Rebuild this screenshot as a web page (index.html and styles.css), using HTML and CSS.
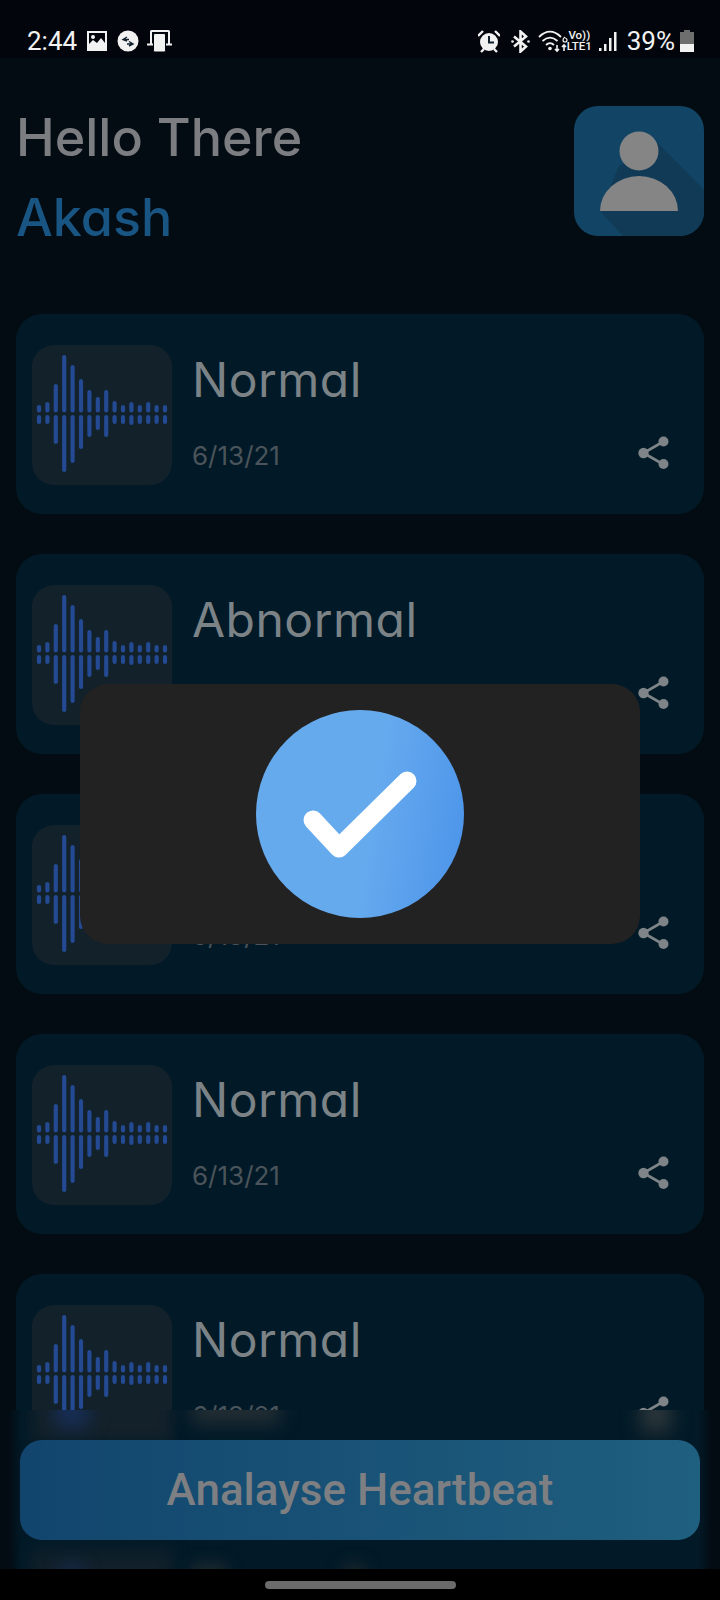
FILE: index.html
```html
<!DOCTYPE html>
<html lang="en">
<head>
<meta charset="utf-8">
<title>Heartbeat</title>
<link rel="stylesheet" href="styles.css">
</head>
<body>
<svg class="defs" width="0" height="0" aria-hidden="true">
  <symbol id="wave" viewBox="0 0 140 140">
    <path d="M7 62V65.500M15.400 59V65.500M23.800 41V65.500M32.200 12V65.500M40.600 22V65.500M49 36V65.500M57.400 47V65.500M65.800 54V65.500M74.200 47V65.500M82.600 58V65.500M91 62V65.500M99.400 59V65.500M107.800 62V65.500M116.200 59V65.500M124.600 62V65.500M133 62V65.500M7 72V77M15.400 72V77M23.800 72V97M32.200 72V125M40.600 72V116M49 72V102M57.400 72V90M65.800 72V83M74.200 72V90M82.600 72V77M91 72V77M99.400 72V78M107.800 72V77M116.200 72V77M124.600 72V77M133 72V77" fill="none" stroke="#234a92" stroke-width="4.200" stroke-linecap="round"/>
  </symbol>
  <symbol id="share" viewBox="0 0 32 33">
    <path d="M25.500 5.500 5.500 17 25.500 28.500" fill="none" stroke="#7e8487" stroke-width="2.600"/>
    <circle cx="25.500" cy="5.500" r="5" fill="#7e8487"/>
    <circle cx="5.500" cy="17" r="5.200" fill="#7e8487"/>
    <circle cx="25.500" cy="28" r="5" fill="#7e8487"/>
  </symbol>
</svg>
<div class="app">
  <div class="status">
    <div class="status-left">
      <span class="clock">2:44</span>
      <svg class="ic" width="20" height="20" viewBox="0 0 20 20"><path fill="#f2f2f2" fill-rule="evenodd" d="M0 0h20v20H0zM2 2v11l4-4 4 3 4-5 4 5V2zM6 4a2 2 0 1 1 0 4 2 2 0 0 1 0-4z"/></svg>
      <svg class="ic" width="22" height="22" viewBox="0 0 22 22"><circle cx="11" cy="11" r="10.500" fill="#f2f2f2"/><path d="M10 7 6 9.500 10 11M12 11.500l4 2.500-4 2M7 9.500h5M10 14h6" fill="none" stroke="#10202c" stroke-width="1.400"/></svg>
      <svg class="ic device" width="25" height="22" viewBox="0 0 25 22"><path d="M4 15V1.500a.5.500 0 0 1 .5-.5h17a.5.500 0 0 1 .500.500V15" fill="none" stroke="#f2f2f2" stroke-width="2"/><path d="M0 14.500h6M19 14.500h6" stroke="#f2f2f2" stroke-width="2"/><rect x="6.500" y="3.500" width="12" height="18.500" rx="1.500" fill="#f2f2f2" stroke="#02060c" stroke-width="1"/></svg>
    </div>
    <div class="status-right">
      <svg class="ic alarm" width="22" height="23" viewBox="0 0 22 23"><path d="M0 6 5 1M22 6l-5-5" stroke="#f2f2f2" stroke-width="2.400"/><circle cx="11" cy="12" r="9" fill="#f2f2f2"/><path d="M11 6v6.500h5" fill="none" stroke="#10202c" stroke-width="2"/><path d="M3 22l3-3M19 22l-3-3" stroke="#f2f2f2" stroke-width="2.400"/></svg>
      <svg class="ic" width="19" height="23" viewBox="0 0 19 23"><path d="M3 6.500 15 16.500 9.500 21.500V1.500L15 6.500 3 16.500" fill="none" stroke="#f2f2f2" stroke-width="2.600"/><circle cx="1.500" cy="11.500" r="1.300" fill="#f2f2f2"/><circle cx="17.500" cy="11.500" r="1.300" fill="#f2f2f2"/></svg>
      <svg class="ic wifi" width="31" height="23" viewBox="0 0 31 23"><path d="M1 7c7-7 15-7 22 0M4.500 11c5-4.500 10-4.500 15 0M8 15c2.500-2.500 5.500-2.500 8 0" fill="none" stroke="#f2f2f2" stroke-width="1.800"/><circle cx="12" cy="18.500" r="1.800" fill="#f2f2f2"/><path d="M19 15v6M17 19l2 2 2-2M26 21v-6M24 17l2-2 2 2" fill="none" stroke="#f2f2f2" stroke-width="1.600"/><path d="M27 7c-1.500 1-2 2-2 3a2 2 0 1 0 2-2" fill="none" stroke="#f2f2f2" stroke-width="1.200"/></svg>
      <span class="volte"><span>Vo))</span><span>LTE1</span></span>
      <svg class="ic" width="18" height="21" viewBox="0 0 18 21"><path fill="#f2f2f2" d="M0 17h2.500v3H0zM5 13h2.500v7H5zM10 7h2.500v13H10zM15 1h2.500v19H15z"/></svg>
      <span class="pct">39%</span>
      <svg class="ic" width="14" height="22" viewBox="0 0 14 22"><path fill="#6e6e6e" d="M4 0h6v2h4v13H0V2h4z"/><path fill="#f2f2f2" d="M0 14h14v8H0z"/></svg>
    </div>
  </div>

  <header class="head">
    <div class="greet">
      <div class="hello">Hello There</div>
      <div class="name">Akash</div>
    </div>
    <svg class="avatar" width="130" height="130" viewBox="0 0 130 130">
      <path fill="#103a55" d="M84 37 130 84V106a24 24 0 0 1-24 24H49L26 105 45 60z"/>
      <circle cx="65" cy="45" r="19.500" fill="#858585"/>
      <path d="M26 105a39 35 0 0 1 78 0z" fill="#858585"/>
    </svg>
  </header>

  <main class="list">
    <article class="card">
      <svg class="thumb"><use href="#wave"/></svg>
      <div class="body">
        <div class="title">Normal</div>
        <div class="meta"><span class="date">6/13/21</span><svg class="share"><use href="#share"/></svg></div>
      </div>
    </article>
    <article class="card">
      <svg class="thumb"><use href="#wave"/></svg>
      <div class="body">
        <div class="title">Abnormal</div>
        <div class="meta"><span class="date">6/13/21</span><svg class="share"><use href="#share"/></svg></div>
      </div>
    </article>
    <article class="card">
      <svg class="thumb"><use href="#wave"/></svg>
      <div class="body">
        <div class="title">Normal</div>
        <div class="meta"><span class="date">6/13/21</span><svg class="share"><use href="#share"/></svg></div>
      </div>
    </article>
    <article class="card">
      <svg class="thumb"><use href="#wave"/></svg>
      <div class="body">
        <div class="title">Normal</div>
        <div class="meta"><span class="date">6/13/21</span><svg class="share"><use href="#share"/></svg></div>
      </div>
    </article>
    <article class="card">
      <svg class="thumb"><use href="#wave"/></svg>
      <div class="body">
        <div class="title">Normal</div>
        <div class="meta"><span class="date">6/13/21</span><svg class="share"><use href="#share"/></svg></div>
      </div>
    </article>
  </main>

  <div class="footer">
    <span class="smear smear-thumb-a"></span>
    <span class="smear smear-bars-a"></span>
    <span class="smear smear-date"></span>
    <span class="smear smear-share"></span>
    <span class="smear smear-thumb-b"></span>
    <span class="smear smear-bars-b"></span>
    <span class="smear smear-title-a"></span>
    <span class="smear smear-title-b"></span>
    <button class="cta">Analayse Heartbeat</button>
  </div>
  <div class="navbar"><span class="pill"></span></div>

  <div class="scrim">
    <div class="dialog">
      <svg class="tick" width="208" height="208" viewBox="0 0 208 208">
        <defs>
          <linearGradient id="tickfill" x1="0" y1="0.420" x2="1" y2="0.580">
            <stop offset="0.550" stop-color="#66aaee"/>
            <stop offset="1" stop-color="#4e96ea"/>
          </linearGradient>
        </defs>
        <circle cx="104" cy="104" r="104" fill="url(#tickfill)"/>
        <path d="M57 110 83 138 151 71" fill="none" stroke="#fff" stroke-width="19" stroke-linecap="round" stroke-linejoin="round"/>
      </svg>
    </div>
  </div>
</div>
</body>
</html>
```
FILE: styles.css
```css
* { box-sizing: border-box; }
html, body { margin: 0; padding: 0; background: #030c13; }
.defs { position: absolute; }
.app {
  position: relative;
  width: 720px;
  height: 1600px;
  overflow: hidden;
  background: #030c13;
  font-family: Inter, "Liberation Sans", sans-serif;
  font-feature-settings: "cv11" 1;
}
.status {
  height: 58px;
  background: #02060c;
  display: flex;
  justify-content: space-between;
  align-items: center;
  padding: 24px 26px 0 27px;
  color: #f2f2f2;
  font-family: Roboto, sans-serif;
  position: relative;
  z-index: 3;
}
.status-left, .status-right { display: flex; align-items: center; }
.status-left { gap: 10px; }
.clock { font-size: 26px; }
.device { margin-left: -2px; }
.status-right { gap: 10px; }
.ic { display: block; flex: none; }
.alarm { margin-right: 1px; }
.wifi { margin-left: -2px; }
.volte {
  display: flex;
  flex-direction: column;
  align-items: center;
  font-size: 11.500px;
  line-height: 11px;
  font-weight: 500;
  margin: 0 -3px 0 -12px;
}
.pct { font-size: 26px; margin-right: -5px; }

.head {
  display: flex;
  justify-content: space-between;
  align-items: flex-start;
  padding: 40px 16px 0 16px;
}
.hello, .name { font-size: 52px; line-height: 80px; font-weight: 500; }
.hello { color: #7b7d80; }
.name { color: #195583; }
.avatar {
  display: block;
  margin-top: 8px;
  border-radius: 24px;
  background: #124565;
}

.list {
  display: flex;
  flex-direction: column;
  gap: 40px;
  padding: 56px 16px 0;
}
.card {
  flex: none;
  height: 200px;
  display: flex;
  padding: 31px 34px 0 16px;
  border-radius: 26px;
  background: #021a27;
}
.thumb {
  display: block;
  flex: none;
  width: 140px;
  height: 140px;
  border-radius: 22px;
  background: #13212a;
}
.body { flex: 1; min-width: 0; padding: 5px 0 0 20px; }
.title { font-size: 48px; line-height: 60px; letter-spacing: 0.500px; color: #7c8387; }
.meta {
  display: flex;
  justify-content: space-between;
  align-items: flex-start;
  margin-top: 26px;
}
.date { font-size: 26px; line-height: 40px; color: #4a545a; }
.share { display: block; width: 32px; height: 33px; }

.footer {
  position: absolute;
  left: 0;
  right: 0;
  top: 1410px;
  height: 159px;
  padding: 30px 20px 29px;
  overflow: hidden;
  background: linear-gradient(90deg, #030c13 9px, #021a27 22px, #021a27 698px, #030c13 711px);
}
.smear { position: absolute; display: block; }
.smear-thumb-a { left: 32px; top: -30px; width: 140px; height: 62px; background: #13212a; filter: blur(7px); }
.smear-bars-a { left: 55px; top: -24px; width: 34px; height: 42px; background: #172d55; filter: blur(9px); }
.smear-date { left: 192px; top: -16px; width: 88px; height: 30px; background: #222d33; filter: blur(9px); }
.smear-share { left: 642px; top: -14px; width: 28px; height: 36px; background: #30383c; filter: blur(10px); }
.smear-thumb-b { left: 32px; top: 140px; width: 140px; height: 50px; background: #11202a; filter: blur(8px); }
.smear-bars-b { left: 60px; top: 155px; width: 24px; height: 30px; background: #172a4e; filter: blur(8px); }
.smear-title-a { left: 192px; top: 155px; width: 34px; height: 26px; background: #232c31; filter: blur(8px); }
.smear-title-b { left: 344px; top: 155px; width: 20px; height: 26px; background: #1f292e; filter: blur(8px); }
.cta {
  position: relative;
  display: block;
  width: 100%;
  height: 100px;
  border: 0;
  border-radius: 22px;
  background: linear-gradient(90deg, #12456d, #1f5f7f);
  color: #7d7f82;
  font-family: Roboto, sans-serif;
  font-size: 44px;
  font-weight: 500;
}
.navbar {
  position: absolute;
  left: 0;
  right: 0;
  bottom: 0;
  height: 31px;
  background: #000;
  display: flex;
  justify-content: center;
  padding-top: 12px;
}
.pill {
  width: 191px;
  height: 8px;
  border-radius: 4px;
  background: #6b6b6b;
}
.scrim {
  position: absolute;
  inset: 0;
  display: flex;
  justify-content: center;
  align-items: flex-start;
  padding-top: 684px;
}
.dialog {
  width: 560px;
  height: 260px;
  border-radius: 28px;
  background: #222;
  display: flex;
  justify-content: center;
  align-items: center;
}
.tick { display: block; }
```
